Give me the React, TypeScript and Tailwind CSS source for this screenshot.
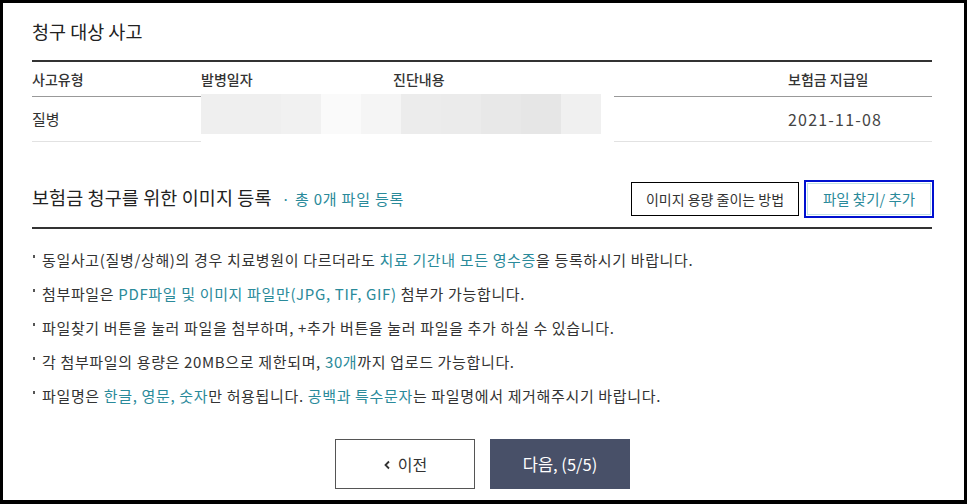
import React from "react";

const teal = "text-[#2a8a9a]";

function Blur() {
  const shades = ["#efefef", "#efefef", "#f1f1f1", "#fafafa", "#f5f5f5", "#ececec", "#ebebeb", "#e8e8e8", "#e6e6e6", "#f0f0f0"];
  return (
    <div className="flex h-[40px] w-[400px] -mt-[2px]">
      {shades.map((c, i) => (
        <div key={i} className="h-full flex-1" style={{ backgroundColor: c }} />
      ))}
    </div>
  );
}

function Bullet({ children }: { children: React.ReactNode }) {
  return (
    <li className="h-[34px] flex items-center">
      <span className="relative -top-[4px] ml-[1px] mr-[7px] w-[2px] h-[3px] bg-[#555]" />
      <span>{children}</span>
    </li>
  );
}

export default function App() {
  return (
    <div
      className="h-screen w-full border-black border-l-[3px] border-t-[3px] border-r-[3px] border-b-[4px] bg-white text-[#333] overflow-hidden"
      style={{ fontFamily: '"Noto Sans CJK KR", "Noto Sans", sans-serif' }}
    >
      <div className="w-[900px] ml-[29px]">
        <h2 className="h-[57px] flex items-center text-[18.5px] text-[#222] pt-[1px]">청구 대상 사고</h2>

        <div className="border-t-[2px] border-[#333]">
          <div className="grid grid-cols-[169px_192px_395px_144px] h-[34px] items-center text-[14px] text-[#333] font-medium">
            <div>사고유형</div>
            <div>발병일자</div>
            <div>진단내용</div>
            <div>보험금 지급일</div>
          </div>
          <div className="grid grid-cols-[169px_413px_318px] h-[46px] text-[15px]">
            <div className="border-t border-b border-t-[#999] border-b-[#e2e2e2] flex items-center">질병</div>
            <div>
              <Blur />
            </div>
            <div className="border-t border-b border-t-[#999] border-b-[#e2e2e2] grid grid-cols-[174px_144px] items-center">
              <div />
              <div className="text-[#444] text-[16px] tracking-[1.2px]">2021-11-08</div>
            </div>
          </div>
        </div>

        <div className="mt-[39px] h-[36px] flex items-center justify-between">
          <div className="flex items-baseline -mt-[3px]">
            <h3 className="text-[18.5px] text-[#222] tracking-[0.1px]">보험금 청구를 위한 이미지 등록</h3>
            <span className={`ml-[10px] text-[15px] tracking-[0.8px] ${teal}`}>· 총 0개 파일 등록</span>
          </div>
          <div className="flex items-center gap-[8px]">
            <button className="h-[34px] w-[168px] border border-black text-[14px] text-[#333]">이미지 용량 줄이는 방법</button>
            <button className={`h-[32px] w-[124px] mr-[1px] border border-[#bfe1e6] outline-[2px] outline-solid outline-[#0010d0] outline-offset-[1px] text-[14.5px] ${teal}`}>
              파일 찾기/ 추가
            </button>
          </div>
        </div>

        <div className="mt-[10px] border-t-[2px] border-[#333]" />

        <ul className="mt-[14px] text-[15px] tracking-[0.65px] text-[#333]">
          <Bullet>
            동일사고(질병/상해)의 경우 치료병원이 다르더라도 <span className={teal}>치료 기간내 모든 영수증</span>을 등록하시기 바랍니다.
          </Bullet>
          <Bullet>
            첨부파일은 <span className={teal}>PDF파일 및 이미지 파일만(JPG, TIF, GIF)</span> 첨부가 가능합니다.
          </Bullet>
          <Bullet>파일찾기 버튼을 눌러 파일을 첨부하며, +추가 버튼을 눌러 파일을 추가 하실 수 있습니다.</Bullet>
          <Bullet>
            각 첨부파일의 용량은 20MB으로 제한되며, <span className={teal}>30개</span>까지 업로드 가능합니다.
          </Bullet>
          <Bullet>
            파일명은 <span className={teal}>한글, 영문, 숫자</span>만 허용됩니다. <span className={teal}>공백과 특수문자</span>는 파일명에서 제거해주시기 바랍니다.
          </Bullet>
        </ul>
      </div>

      <div className="mt-[26px] flex justify-center gap-[15px] pr-[2px]">
        <button className="h-[50px] w-[140px] border border-[#555] bg-white text-[16px] text-[#333] flex items-center justify-center gap-[7px]">
          <svg width="8" height="10" viewBox="0 0 8 10" className="mt-[1px]">
            <path d="M6 1.5 L2.5 5 L6 8.5" fill="none" stroke="#333" strokeWidth="1.8" />
          </svg>
          이전
        </button>
        <button className="h-[50px] w-[140px] bg-[#485068] text-[16.5px] text-white">다음, (5/5)</button>
      </div>
    </div>
  );
}
